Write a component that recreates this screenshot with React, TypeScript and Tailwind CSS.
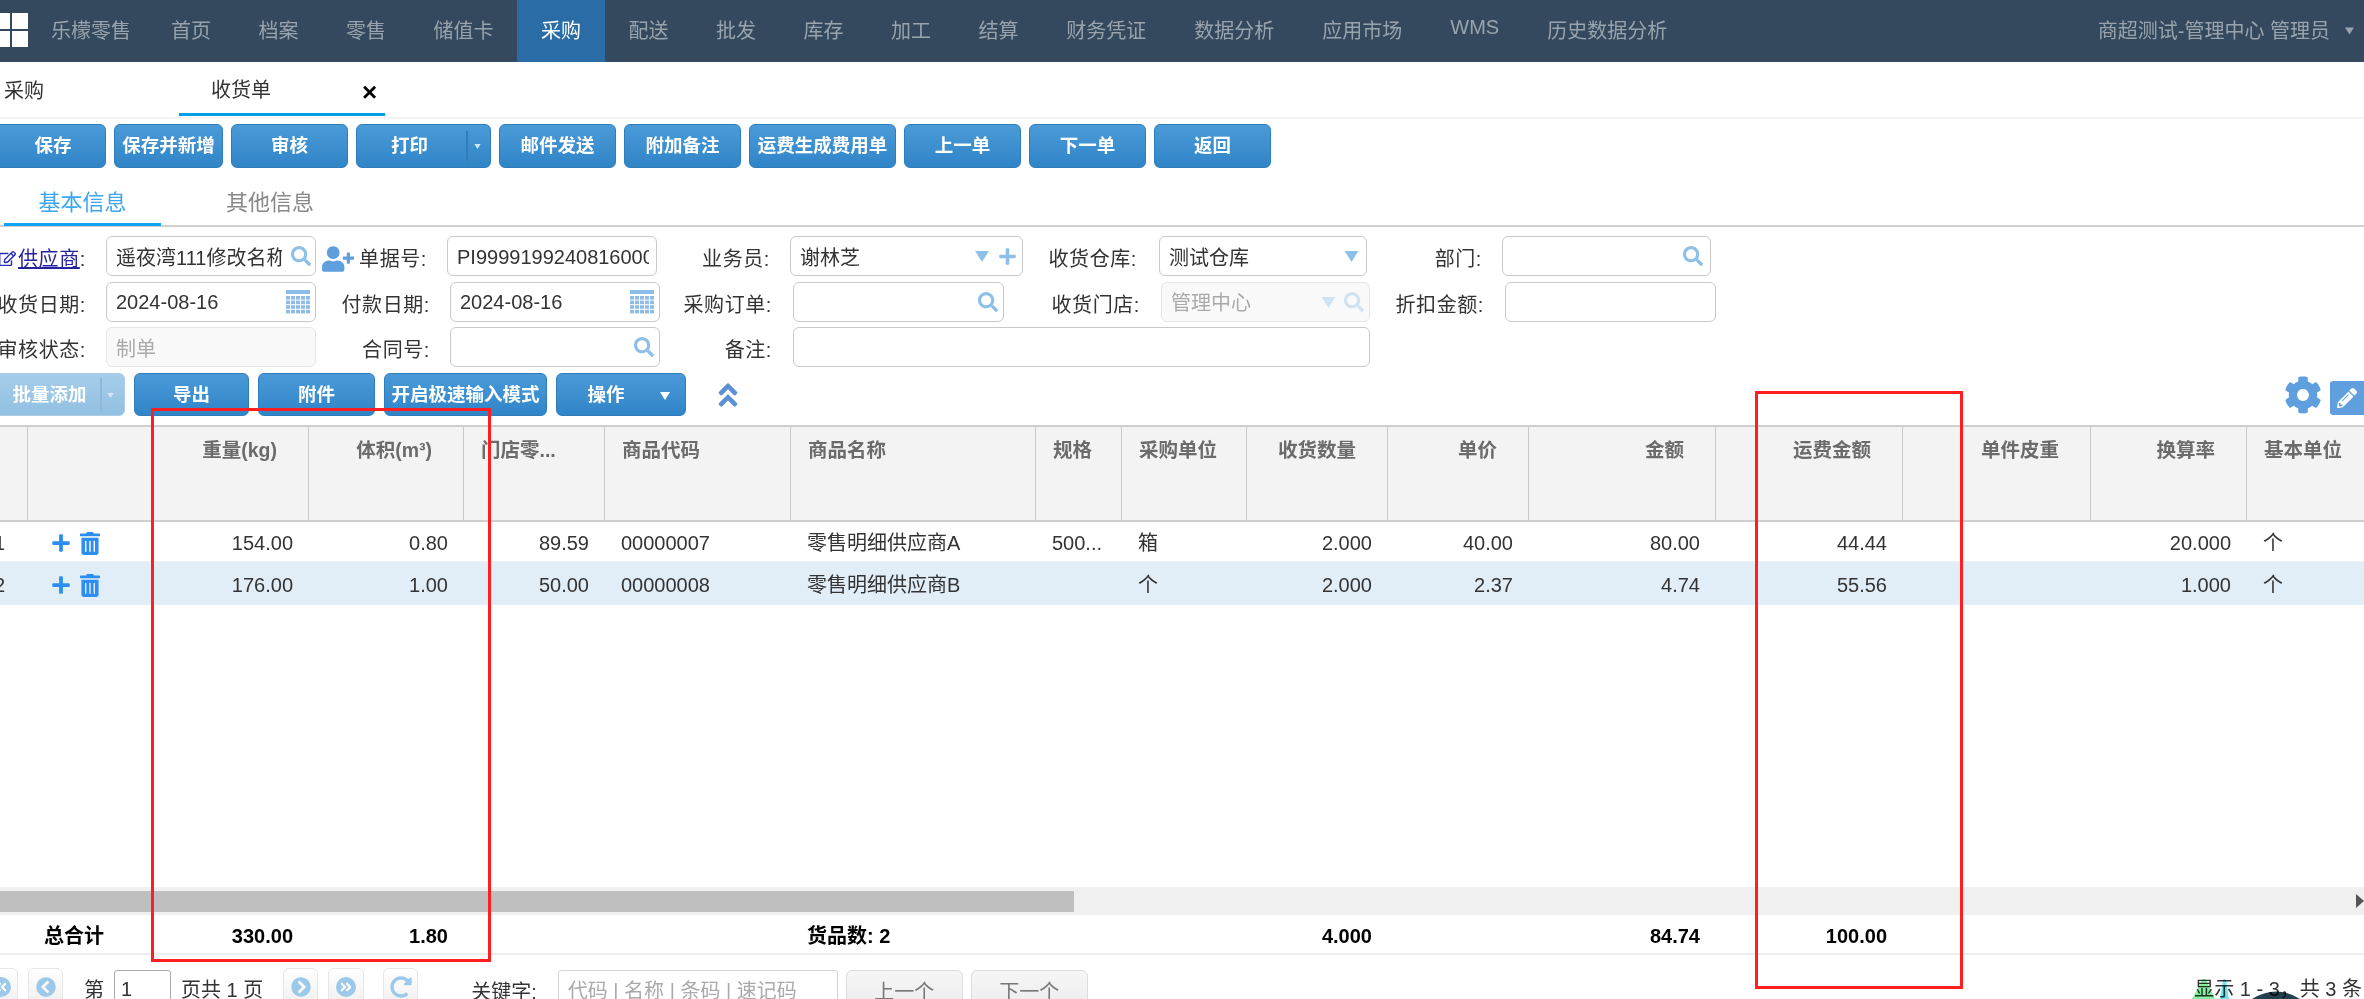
import type { ReactNode } from "react";
import {
  FaAngleDoubleUp,
  FaChevronCircleLeft,
  FaChevronCircleRight,
  FaAngleDoubleLeft,
  FaAngleDoubleRight,
  FaCog,
  FaPencilAlt,
  FaPlus,
  FaRedoAlt,
  FaRegEdit,
  FaSearch,
  FaTrashAlt,
  FaUserPlus,
} from "react-icons/fa";

const navItems = ["首页", "档案", "零售", "储值卡", "采购", "配送", "批发", "库存", "加工", "结算", "财务凭证", "数据分析", "应用市场", "WMS", "历史数据分析"];

const gridCols = "grid grid-cols-[28px_281px_155px_141px_186px_245px_86px_125px_141px_141px_187px_187px_188px_156px_117px]";

// right 管表头对齐,cellRight 管单元格对齐
const columns = [
  { title: "重量(kg)", right: true, cellRight: true },
  { title: "体积(m³)", right: true, cellRight: true },
  { title: "门店零...", right: false, cellRight: true },
  { title: "商品代码", right: false, cellRight: false },
  { title: "商品名称", right: false, cellRight: false },
  { title: "规格", right: false, cellRight: false },
  { title: "采购单位", right: false, cellRight: false },
  { title: "收货数量", right: true, cellRight: true },
  { title: "单价", right: true, cellRight: true },
  { title: "金额", right: true, cellRight: true },
  { title: "运费金额", right: true, cellRight: true },
  { title: "单件皮重", right: true, cellRight: true },
  { title: "换算率", right: true, cellRight: true },
  { title: "基本单位", right: false, cellRight: false },
];

const rows = [
  ["154.00", "0.80", "89.59", "00000007", "零售明细供应商A", "500...", "箱", "2.000", "40.00", "80.00", "44.44", "", "20.000", "个"],
  ["176.00", "1.00", "50.00", "00000008", "零售明细供应商B", "", "个", "2.000", "2.37", "4.74", "55.56", "", "1.000", "个"],
];

function Caret({ className }: { className: string }) {
  return (
    <svg viewBox="0 0 10 8" className={className} fill="currentColor">
      <path d="M0 0h10L5 8z" />
    </svg>
  );
}

function Btn({ className, children, light }: { className: string; children: ReactNode; light?: boolean }) {
  return (
    <button
      className={`relative flex h-full shrink-0 items-center justify-center rounded-[6px] border text-[18.5px] font-bold text-white ${
        light ? "border-[#a9cde8] bg-linear-to-b from-[#a5cdea] to-[#92c0e2]" : "border-[#2f7ebb] bg-linear-to-b from-[#4a9ad8] to-[#3085c7]"
      } ${className}`}
    >
      {children}
    </button>
  );
}

function CalendarIcon() {
  const cells = [];
  for (let r = 0; r < 4; r++) {
    for (let c = 0; c < 5; c++) {
      cells.push(<rect key={`${r}-${c}`} x={c * 5} y={6 + r * 4.6} width="4" height="3.6" />);
    }
  }
  return (
    <svg viewBox="0 0 24 24" className="h-[24px] w-[24px] shrink-0 text-[#8dbce6]" fill="currentColor">
      <rect x="0" y="0" width="24" height="4" />
      {cells}
    </svg>
  );
}

function Search() {
  return <FaSearch className="h-[20px] w-[20px] shrink-0 text-[#8cc0e8]" />;
}

function DoubleCircle({ left }: { left?: boolean }) {
  return (
    <span className="flex h-[20px] w-[20px] items-center justify-center rounded-full bg-[#9cc9ea] text-white">
      {left ? <FaAngleDoubleLeft className="h-[14px] w-[14px]" /> : <FaAngleDoubleRight className="h-[14px] w-[14px]" />}
    </span>
  );
}

function Field({ label, labelClass, boxClass, children, disabled }: { label: ReactNode; labelClass: string; boxClass: string; children?: ReactNode; disabled?: boolean }) {
  return (
    <>
      <div className={`flex h-full shrink-0 items-center justify-end whitespace-nowrap pt-[5px] tracking-[0.6px] ${labelClass}`}>{label}</div>
      <div
        className={`flex h-full shrink-0 items-center overflow-hidden rounded-[6px] border pl-[9px] pr-[5px] ${
          disabled ? "border-[#e6e6e6] bg-[#f9f9f9] text-[#aaa]" : "border-[#c9c9c9] bg-white"
        } ${boxClass}`}
      >
        {children}
      </div>
    </>
  );
}

function Head({ children, right, last }: { children?: ReactNode; right?: boolean; last?: boolean }) {
  return (
    <div className={`h-full overflow-hidden whitespace-nowrap pt-[10px] text-[19.5px] font-bold leading-[26px] text-[#6b6b6b] ${last ? "" : "border-r border-[#c9c9c9]"} ${right ? "pr-[31px] text-right" : "pl-[17px] text-left"}`}>
      {children}
    </div>
  );
}

function Cell({ children, right, bold }: { children?: ReactNode; right?: boolean; bold?: boolean }) {
  return (
    <div className={`flex items-center whitespace-nowrap pt-[3px] ${bold ? "font-bold text-black" : "text-[#333]"} ${right ? "justify-end pr-[16px]" : "pl-[16px]"}`}>
      {children}
    </div>
  );
}

function TableRow({ no, values, className }: { no: string; values: string[]; className: string }) {
  return (
    <div className={`${gridCols} ${className}`}>
      <div className="flex items-center justify-end pr-[23px] pt-[3px] text-[#333]">{no}</div>
      <div className="flex items-center justify-between pl-[23px] pr-[16px] pt-[3px]">
        <span className="flex items-center">
          <FaPlus className="h-[20px] w-[20px] text-[#2b8ef0]" />
          <FaTrashAlt className="ml-[9px] h-[23px] w-[20px] text-[#2b8ef0]" />
        </span>
        <span>{values[0]}</span>
      </div>
      {columns.slice(1).map((c, i) => (
        <Cell key={c.title} right={c.cellRight}>{values[i + 1]}</Cell>
      ))}
    </div>
  );
}

function PageBtn({ className, children }: { className: string; children: ReactNode }) {
  return (
    <div className={`flex h-[38px] shrink-0 items-center justify-center rounded-[6px] border border-[#e6e6e6] bg-linear-to-b from-white to-[#efefef] text-[#9cc9ea] ${className}`}>
      {children}
    </div>
  );
}

export default function App() {
  return (
    <div className="relative flex h-[999px] w-[2364px] flex-col overflow-hidden bg-white text-[20px] text-[#333] [font-family:'Liberation_Sans','Noto_Sans_CJK_SC',sans-serif]">
      {/* 顶部导航 */}
      <div className="flex h-[62px] shrink-0 items-stretch bg-[#34495e] text-[#98a3ad]">
        <div className="w-[51px] shrink-0 pt-[13px]">
          <div className="grid w-[28px] grid-cols-[10px_16px] grid-rows-[16px_16px] gap-[2px]">
            <div className="bg-white" />
            <div className="bg-white" />
            <div className="bg-white" />
            <div className="bg-white" />
          </div>
        </div>
        <div className="mr-[16.25px] flex items-center">乐檬零售</div>
        {navItems.map((item) => (
          <div
            key={item}
            className={`flex items-center ${item.length >= 4 || item === "WMS" ? "px-[24px]" : "px-[23.75px]"} ${item === "采购" ? "bg-[#2a6ca5] text-white" : ""} ${item === "WMS" ? "pb-[8px]" : ""}`}
          >
            {item}
          </div>
        ))}
        <div className="ml-auto flex items-center pr-[10px]">
          <span>商超测试-管理中心 管理员</span>
          <Caret className="ml-[15px] h-[8px] w-[9px]" />
        </div>
      </div>

      {/* 页签 */}
      <div className="flex h-[57px] shrink-0 border-b-[2px] border-[#f5f5f5]">
        <div className="w-[179px] pl-[4px] pt-[16px] leading-[26px]">采购</div>
        <div className="relative mb-[1px] flex w-[206px] border-b-[3px] border-[#00a0e9] pl-[32px] pt-[15px] leading-[26px]">
          收货单
          <span className="absolute left-[183px] top-[17px] text-[26px] font-bold leading-[26px] text-black">×</span>
        </div>
      </div>

      {/* 操作按钮 */}
      <div className="mt-[5px] flex h-[44px] shrink-0 gap-[8px] pl-0">
        <Btn className="-ml-[12px] w-[118px] pl-[12px]">保存</Btn>
        <Btn className="w-[109px]">保存并新增</Btn>
        <Btn className="w-[117px]">审核</Btn>
        <Btn className="w-[135px] pr-[28px]">
          打印
          <span className="absolute bottom-[6px] left-[109px] top-[6px] w-[2px] bg-[#2f7ebb]" />
          <Caret className="absolute left-[117px] top-[19px] h-[5px] w-[7px] text-[#cfe4f5]" />
        </Btn>
        <Btn className="w-[117px]">邮件发送</Btn>
        <Btn className="w-[117px]">附加备注</Btn>
        <Btn className="w-[147px]">运费生成费用单</Btn>
        <Btn className="w-[117px]">上一单</Btn>
        <Btn className="w-[117px]">下一单</Btn>
        <Btn className="w-[117px]">返回</Btn>
      </div>

      {/* 信息页签 */}
      <div className="flex h-[59px] shrink-0 items-end border-b-[2px] border-[#d0d0d0]">
        <div className="-mb-[1px] ml-[4px] h-[41px] w-[157px] border-b-[3px] border-[#0ea5f5] text-center text-[22px] leading-[36px] text-[#3ea6f0]">基本信息</div>
        <div className="-mb-[1px] ml-[65px] h-[41px] text-[22px] leading-[36px] text-[#888]">其他信息</div>
      </div>

      {/* 表单 */}
      <div className="flex shrink-0 flex-col pt-[9px]">
        <div className="flex h-[40px]">
          <Field
            labelClass="w-[86px]"
            boxClass="ml-[20px] w-[210px]"
            label={
              <>
                <FaRegEdit className="mr-[2px] h-[19px] w-[17px] shrink-0 text-[#2a2ab8]" />
                <span className="text-[#2424a0] underline">供应商</span>:
              </>
            }
          >
            <span className="w-[166px] shrink-0 overflow-hidden whitespace-nowrap pt-[4px]">遥夜湾111修改名称</span>
            <span className="ml-[9px]"><Search /></span>
          </Field>
          <Field
            labelClass="w-[111px]"
            boxClass="ml-[20px] w-[210px]"
            label={
              <>
                <FaUserPlus className="mr-[5px] h-[26px] w-[32px] text-[#5f9fdd]" />
                单据号:
              </>
            }
          >
            <span className="w-[192px] overflow-hidden whitespace-nowrap pt-[1px]">PI9999199240816000</span>
          </Field>
          <Field labelClass="w-[113px]" boxClass="ml-[20px] w-[233px] justify-between" label="业务员:">
            <span className="pt-[4px]">谢林芝</span>
            <span className="flex items-center">
              <Caret className="mr-[9px] h-[11px] w-[14px] text-[#8cc0e8]" />
              <FaPlus className="h-[19px] w-[19px] text-[#8cc0e8]" />
            </span>
          </Field>
          <Field labelClass="w-[114px]" boxClass="ml-[22px] w-[208px] justify-between pr-[7px] pl-[7px]" label="收货仓库:">
            <span className="pt-[4px]">测试仓库</span>
            <Caret className="h-[11px] w-[15px] text-[#8cc0e8]" />
          </Field>
          <Field labelClass="w-[115px]" boxClass="ml-[20px] w-[209px] justify-end pr-[7px]" label="部门:">
            <Search />
          </Field>
        </div>
        <div className="mt-[6px] flex h-[40px]">
          <Field labelClass="w-[86px]" boxClass="ml-[20px] w-[210px] justify-between pr-[3px]" label="收货日期:">
            <span>2024-08-16</span>
            <CalendarIcon />
          </Field>
          <Field labelClass="w-[114px]" boxClass="ml-[20px] w-[210px] justify-between pr-[3px]" label="付款日期:">
            <span>2024-08-16</span>
            <CalendarIcon />
          </Field>
          <Field labelClass="w-[112px]" boxClass="ml-[21px] w-[211px] justify-end" label="采购订单:">
            <Search />
          </Field>
          <Field disabled labelClass="w-[136px]" boxClass="ml-[21px] w-[209px] justify-between" label="收货门店:">
            <span className="pt-[2px]">管理中心</span>
            <span className="flex items-center">
              <Caret className="mr-[8px] h-[11px] w-[15px] text-[#cfe3f3]" />
              <FaSearch className="h-[20px] w-[20px] text-[#cfe3f3]" />
            </span>
          </Field>
          <Field labelClass="w-[114px]" boxClass="ml-[21px] w-[211px]" label="折扣金额:" />
        </div>
        <div className="mt-[5px] flex h-[40px]">
          <Field disabled labelClass="w-[86px]" boxClass="ml-[20px] w-[210px]" label="审核状态:">
            <span className="pt-[3px]">制单</span>
          </Field>
          <Field labelClass="w-[114px]" boxClass="ml-[20px] w-[210px] justify-end" label="合同号:">
            <Search />
          </Field>
          <Field labelClass="w-[112px]" boxClass="ml-[21px] w-[577px]" label="备注:" />
        </div>
      </div>

      {/* 表格工具条 */}
      <div className="mt-[6px] flex h-[43px] shrink-0 items-stretch gap-[9px]">
        <Btn light className="-ml-[12px] w-[137px] pr-[28px]">
          <span className="pl-[14px]">批量添加</span>
          <span className="absolute bottom-[4px] left-[111px] top-[4px] w-[2px] bg-[#8db8da]" />
          <Caret className="absolute left-[118px] top-[19px] h-[5px] w-[7px] text-[#d8e8f4]" />
        </Btn>
        <Btn className="w-[115px]">导出</Btn>
        <Btn className="w-[117px]">附件</Btn>
        <Btn className="w-[163px]">开启极速输入模式</Btn>
        <Btn className="w-[130px] pr-[30px]">
          操作
          <Caret className="absolute left-[103px] top-[18px] h-[8px] w-[10px] text-white" />
        </Btn>
        <div className="ml-[21px] flex items-center">
          <FaAngleDoubleUp className="h-[30px] w-[24px] text-[#5b8fd6]" />
        </div>
        <div className="ml-auto flex items-center">
          <FaCog className="h-[38px] w-[38px] text-[#5f9fdd]" />
          <div className="ml-[8px] mt-[6px] flex h-[34px] w-[34px] items-center justify-center rounded-l-[3px] bg-[#5f9fdd]">
            <FaPencilAlt className="h-[20px] w-[20px] text-white" />
          </div>
        </div>
      </div>

      {/* 表格 */}
      <div className="mt-[9px] flex min-h-0 flex-1 flex-col">
        <div className={`${gridCols} h-[97px] shrink-0 border-y-[2px] border-[#cfcfcf] bg-[#f3f3f3]`}>
          <Head />
          {columns.map((c, i) => (
            <Head key={c.title} right={c.right} last={i === columns.length - 1}>{c.title}</Head>
          ))}
        </div>
        <TableRow no="1" values={rows[0]} className="h-[40px] shrink-0 border-b border-[#f0f0f0]" />
        <TableRow no="2" values={rows[1]} className="h-[43px] shrink-0 bg-[#e1edf7]" />
        <div className="flex-1" />

        {/* 横向滚动条 */}
        <div className="relative flex h-[28px] shrink-0 items-center bg-[#f0f0f0]">
          <div className="h-[21px] w-[1074px] bg-[#bfbfbf]" />
          <svg viewBox="0 0 8 14" className="absolute right-0 top-[7px] h-[14px] w-[8px] text-[#555]" fill="currentColor">
            <path d="M0 0l8 7-8 7z" />
          </svg>
        </div>

        {/* 合计 */}
        <div className={`${gridCols} h-[40px] shrink-0 border-b-[2px] border-[#eeeeee]`}>
          <div />
          <div className="flex items-center justify-between px-[16px] pt-[3px] font-bold text-black">
            <span>总合计</span>
            <span>330.00</span>
          </div>
          <Cell right bold>1.80</Cell>
          <Cell />
          <Cell />
          <Cell bold>货品数: 2</Cell>
          <Cell />
          <Cell />
          <Cell right bold>4.000</Cell>
          <Cell />
          <Cell right bold>84.74</Cell>
          <Cell right bold>100.00</Cell>
        </div>

        {/* 分页 */}
        <div className="flex h-[44px] shrink-0 items-start pt-[13px]">
          <PageBtn className="-ml-[17px] w-[35px]"><DoubleCircle left /></PageBtn>
          <PageBtn className="ml-[10px] w-[35px]"><FaChevronCircleLeft className="h-[20px] w-[20px]" /></PageBtn>
          <span className="ml-[21px] leading-[44px]">第</span>
          <div className="ml-[10px] mt-[2px] h-[40px] w-[57px] rounded-[3px] border border-[#aaa] pl-[6px] leading-[36px]">1</div>
          <span className="ml-[10px] leading-[44px]">页共 1 页</span>
          <PageBtn className="ml-[20px] w-[35px]"><FaChevronCircleRight className="h-[20px] w-[20px]" /></PageBtn>
          <PageBtn className="ml-[10px] w-[36px]"><DoubleCircle /></PageBtn>
          <PageBtn className="ml-[19px] w-[35px] border-[#cfcfcf] text-[#6ea8dc]"><FaRedoAlt className="h-[22px] w-[22px]" /></PageBtn>
          <span className="ml-[53px] leading-[48px]">关键字:</span>
          <div className="ml-[21px] mt-[2px] h-[40px] w-[280px] rounded-[3px] border border-[#d5d5d5] pl-[9px] leading-[40px] text-[#aaa]">代码 | 名称 | 条码 | 速记码</div>
          <div className="ml-[8px] mt-[2px] h-[40px] w-[117px] rounded-[6px] border border-[#dcdcdc] bg-linear-to-b from-[#f6f6f6] to-[#ececec] text-center leading-[42px] text-[#777]">上一个</div>
          <div className="ml-[8px] mt-[2px] h-[40px] w-[117px] rounded-[6px] border border-[#dcdcdc] bg-linear-to-b from-[#f6f6f6] to-[#ececec] text-center leading-[42px] text-[#777]">下一个</div>
          <span className="ml-auto pr-[2px] leading-[42px]">显示 1 - 3，共 3 条</span>
        </div>
      </div>

      {/* 截图上的红框 */}
      <div className="pointer-events-none absolute left-[151px] top-[408px] h-[554px] w-[340px] border-[3px] border-[#ff1f1f]" />
      <div className="pointer-events-none absolute left-[1755px] top-[391px] h-[598px] w-[208px] border-[3px] border-[#ff1f1f]" />

      {/* 右下角悬浮小部件 */}
      <svg viewBox="0 0 110 21" className="absolute left-[2192px] top-[978px] h-[21px] w-[110px] mix-blend-multiply">
        <path d="M0 21 L10 2 Q12 0 14 2 L23 21z" fill="#86efa0" />
        <path d="M28 21 L31 2 Q32 0 34 2 L37 21z" fill="#6ce4ee" />
        <path d="M60 21 Q84 6 108 21z" fill="#23404f" />
      </svg>
    </div>
  );
}
